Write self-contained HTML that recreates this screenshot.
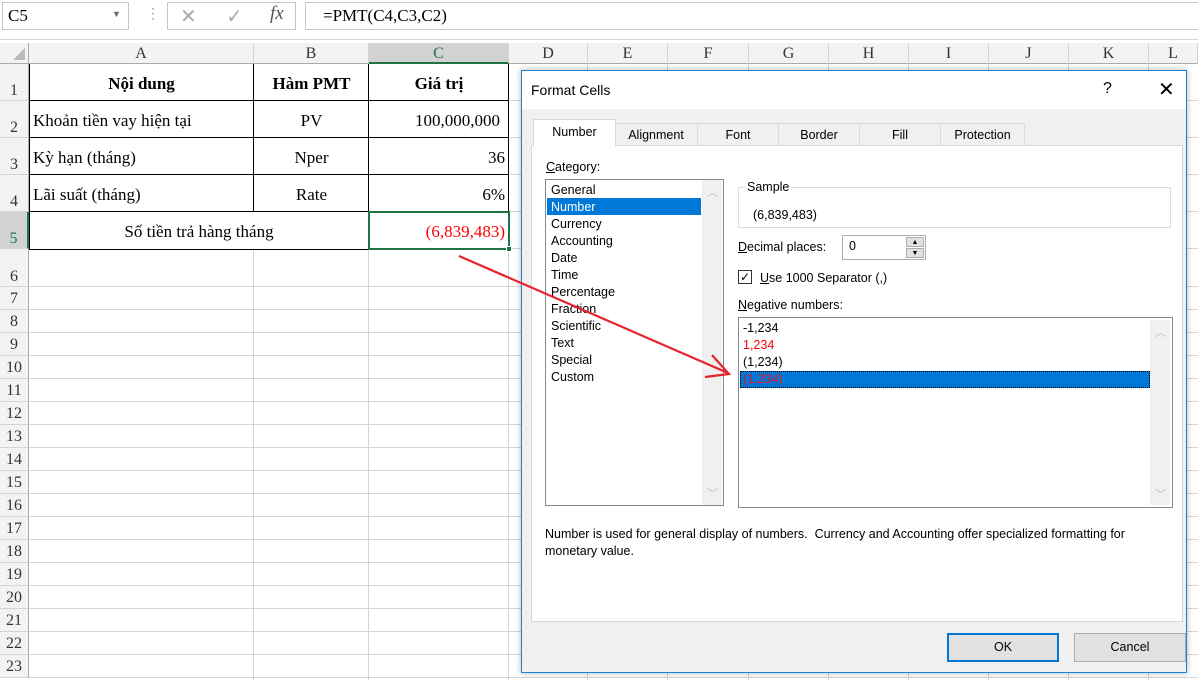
<!DOCTYPE html>
<html><head><meta charset="utf-8"><style>
*{margin:0;padding:0;box-sizing:border-box}
body{width:1198px;height:680px;overflow:hidden;background:#fff;position:relative;font-family:"Liberation Serif",serif}
.a{position:absolute}
.ui{font-family:"Liberation Sans","DejaVu Sans",sans-serif;font-size:12.5px;color:#000}
.ch{position:absolute;top:43px;height:21px;background:#f3f3f3;border-right:1px solid #d4d4d4;border-bottom:1px solid #ababab;text-align:center;font-size:16px;line-height:21px;color:#333}
.rh{position:absolute;left:0;width:29px;background:#f3f3f3;border-bottom:1px solid #d4d4d4;border-right:1px solid #ababab;text-align:center;font-size:16px;color:#333}
.vl{position:absolute;width:1px;background:#d4d4d4;top:64px;height:616px}
.hl{position:absolute;height:1px;background:#d4d4d4;left:29px;width:1169px}
.c{position:absolute;font-size:17px;color:#000;white-space:nowrap}
.it{position:absolute;left:5px;height:17px;line-height:17px}
</style></head><body>
<!-- formula bar -->
<div class="a" style="left:0;top:0;width:1198px;height:40px;background:#fff;border-bottom:1px solid #d4d4d4"></div>
<div class="a" style="left:2px;top:2px;width:127px;height:28px;border:1px solid #c6c6c6;font-size:17px;line-height:26px;padding-left:5px">C5</div>
<div class="a" style="left:112px;top:9px;font-size:9px;color:#666">▼</div>
<div class="a" style="left:146px;top:6px;color:#999;font-size:14px">⋮</div>
<div class="a" style="left:167px;top:2px;width:129px;height:28px;border:1px solid #c6c6c6"></div>
<div class="a" style="left:180px;top:4px;font-size:20px;color:#aaa;font-family:'DejaVu Sans'">✕</div>
<div class="a" style="left:226px;top:4px;font-size:20px;color:#aaa;font-family:'DejaVu Sans'">✓</div>
<div class="a" style="left:270px;top:3px;font-size:19px;font-style:italic;color:#555">fx</div>
<div class="a" style="left:305px;top:2px;width:893px;height:28px;border:1px solid #c6c6c6;border-right:none;font-size:17px;line-height:26px;padding-left:17px">=PMT(C4,C3,C2)</div>
<!-- headers -->
<div class="a" style="left:0;top:43px;width:29px;height:21px;background:#f3f3f3;border-right:1px solid #ababab;border-bottom:1px solid #ababab"></div>
<div class="a" style="left:13px;top:48px;width:0;height:0;border-left:12px solid transparent;border-bottom:12px solid #bbb"></div>
<div class="ch" style="left:29px;width:225px">A</div>
<div class="ch" style="left:254px;width:115px">B</div>
<div class="ch" style="left:369px;width:140px;background:#d2d2d2;color:#217346;border-bottom:2px solid #217346">C</div>
<div class="ch" style="left:509px;width:79px">D</div>
<div class="ch" style="left:588px;width:80px">E</div>
<div class="ch" style="left:668px;width:81px">F</div>
<div class="ch" style="left:749px;width:80px">G</div>
<div class="ch" style="left:829px;width:80px">H</div>
<div class="ch" style="left:909px;width:80px">I</div>
<div class="ch" style="left:989px;width:80px">J</div>
<div class="ch" style="left:1069px;width:80px">K</div>
<div class="ch" style="left:1149px;width:49px">L</div>
<!-- grid -->
<div class="vl" style="left:253px"></div><div class="vl" style="left:368px"></div><div class="vl" style="left:508px"></div>
<div class="vl" style="left:587px"></div><div class="vl" style="left:667px"></div><div class="vl" style="left:748px"></div>
<div class="vl" style="left:828px"></div><div class="vl" style="left:908px"></div><div class="vl" style="left:988px"></div>
<div class="vl" style="left:1068px"></div><div class="vl" style="left:1148px"></div>
<div id="rows"></div>
<script>
var r=[[64,101],[101,138],[138,175],[175,212],[212,249],[249,287]];
for(var i=0;i<17;i++)r.push([287+i*23,310+i*23]);
var h='';
r.forEach(function(v,i){
 var hl=i==4?'background:#d2d2d2;color:#217346;border-right:2px solid #217346;':'';
 h+='<div class="rh" style="top:'+v[0]+'px;height:'+(v[1]-v[0])+'px;line-height:'+(i<6?(2*(v[1]-v[0])-20):(v[1]-v[0]))+'px;'+hl+'">'+(i+1)+'</div>';
 h+='<div class="hl" style="top:'+(v[1]-1)+'px"></div>';
});
document.getElementById('rows').innerHTML=h;
</script>
<!-- table borders -->
<div class="a" style="left:29px;top:64px;width:480px;height:186px;border:1px solid #000;border-top:none;background:#fff"></div>
<div class="a" style="left:29px;top:100px;width:480px;height:1px;background:#000"></div>
<div class="a" style="left:29px;top:137px;width:480px;height:1px;background:#000"></div>
<div class="a" style="left:29px;top:174px;width:480px;height:1px;background:#000"></div>
<div class="a" style="left:29px;top:211px;width:480px;height:1px;background:#000"></div>
<div class="a" style="left:253px;top:64px;width:1px;height:148px;background:#000"></div>
<div class="a" style="left:368px;top:64px;width:1px;height:186px;background:#000"></div>
<div class="c" style="left:29px;width:225px;top:74px;text-align:center;font-weight:bold">Nội dung</div>
<div class="c" style="left:254px;width:115px;top:74px;text-align:center;font-weight:bold">Hàm PMT</div>
<div class="c" style="left:369px;width:140px;top:74px;text-align:center;font-weight:bold">Giá trị</div>
<div class="c" style="left:33px;top:111px">Khoản tiền vay hiện tại</div>
<div class="c" style="left:254px;width:115px;top:111px;text-align:center">PV</div>
<div class="c" style="left:369px;width:131px;top:111px;text-align:right">100,000,000</div>
<div class="c" style="left:33px;top:148px">Kỳ hạn (tháng)</div>
<div class="c" style="left:254px;width:115px;top:148px;text-align:center">Nper</div>
<div class="c" style="left:369px;width:136px;top:148px;text-align:right">36</div>
<div class="c" style="left:33px;top:185px">Lãi suất (tháng)</div>
<div class="c" style="left:254px;width:115px;top:185px;text-align:center">Rate</div>
<div class="c" style="left:369px;width:136px;top:185px;text-align:right">6%</div>
<div class="c" style="left:29px;width:340px;top:222px;text-align:center">Số tiền trả hàng tháng</div>
<div class="a" style="left:368px;top:211px;width:142px;height:39px;border:2px solid #217346"></div>
<div class="a" style="left:506px;top:246px;width:6px;height:6px;background:#217346;border:1px solid #fff"></div>
<div class="c" style="left:369px;width:136px;top:222px;text-align:right;color:#f00">(6,839,483)</div>
<!-- dialog -->
<div class="a ui" style="left:521px;top:70px;width:666px;height:603px;background:#f0f0f0;border:1px solid #1883d7;box-shadow:0 0 6px rgba(0,0,0,.3)">
 <div class="a" style="left:0;top:0;width:664px;height:38px;background:#fff"></div>
 <div class="a" style="left:9px;top:11px;font-size:14px">Format Cells</div>
 <div class="a" style="left:581px;top:9px;font-size:16px">?</div>
 <div class="a" style="left:636px;top:6px;font-size:20px;font-family:'DejaVu Sans';font-weight:200">✕</div>
 <!-- tabs -->
 <div class="a" style="left:9px;top:74px;width:652px;height:477px;background:#fff;border:1px solid #d9d9d9"></div>
 <div class="a" style="left:92px;top:52px;width:84px;height:23px;border:1px solid #d9d9d9;text-align:center;line-height:22px">Alignment</div>
 <div class="a" style="left:175px;top:52px;width:82px;height:23px;border:1px solid #d9d9d9;text-align:center;line-height:22px">Font</div>
 <div class="a" style="left:256px;top:52px;width:82px;height:23px;border:1px solid #d9d9d9;text-align:center;line-height:22px">Border</div>
 <div class="a" style="left:337px;top:52px;width:82px;height:23px;border:1px solid #d9d9d9;text-align:center;line-height:22px">Fill</div>
 <div class="a" style="left:418px;top:52px;width:85px;height:23px;border:1px solid #d9d9d9;text-align:center;line-height:22px">Protection</div>
 <div class="a" style="left:11px;top:48px;width:83px;height:28px;background:#fff;border:1px solid #d9d9d9;border-bottom:none;text-align:center;line-height:25px">Number</div>
 <div class="a" style="left:24px;top:89px"><u>C</u>ategory:</div>
 <!-- category list -->
 <div class="a" style="left:23px;top:108px;width:179px;height:327px;background:#fff;border:1px solid #828790">
  <div class="a" style="left:156px;top:0;width:20px;height:325px;background:#f0f0f0"></div>
  <div class="a" style="left:161px;top:4px;color:#bbb;font-size:11px">︿</div>
  <div class="a" style="left:161px;top:305px;color:#bbb;font-size:11px">﹀</div>
  <div class="a" style="left:1px;top:18px;width:154px;height:17px;background:#0078d7"></div>
  <div class="it" style="top:2px">General</div>
  <div class="it" style="top:19px;color:#fff">Number</div>
  <div class="it" style="top:36px">Currency</div>
  <div class="it" style="top:53px">Accounting</div>
  <div class="it" style="top:70px">Date</div>
  <div class="it" style="top:87px">Time</div>
  <div class="it" style="top:104px">Percentage</div>
  <div class="it" style="top:121px">Fraction</div>
  <div class="it" style="top:138px">Scientific</div>
  <div class="it" style="top:155px">Text</div>
  <div class="it" style="top:172px">Special</div>
  <div class="it" style="top:189px">Custom</div>
 </div>
 <!-- sample -->
 <div class="a" style="left:216px;top:116px;width:433px;height:41px;border:1px solid #dcdcdc"></div>
 <div class="a" style="left:223px;top:109px;background:#fff;padding:0 2px">Sample</div>
 <div class="a" style="left:231px;top:137px">(6,839,483)</div>
 <div class="a" style="left:216px;top:169px"><u>D</u>ecimal places:</div>
 <div class="a" style="left:320px;top:164px;width:84px;height:25px;border:1px solid #adadad;background:#fff;padding:3px 0 0 6px">0</div>
 <div class="a" style="left:384px;top:166px;width:18px;height:10px;background:#e1e1e1;border:1px solid #adadad;font-size:7px;text-align:center;line-height:9px">▲</div>
 <div class="a" style="left:384px;top:177px;width:18px;height:10px;background:#e1e1e1;border:1px solid #adadad;font-size:7px;text-align:center;line-height:9px">▼</div>
 <div class="a" style="left:216px;top:199px;width:14px;height:14px;border:1px solid #333;background:#fff;font-size:12px;line-height:12px;text-align:center">✓</div>
 <div class="a" style="left:238px;top:200px"><u>U</u>se 1000 Separator (,)</div>
 <div class="a" style="left:216px;top:227px"><u>N</u>egative numbers:</div>
 <!-- negative list -->
 <div class="a" style="left:216px;top:246px;width:435px;height:191px;background:#fff;border:1px solid #828790">
  <div class="a" style="left:411px;top:2px;width:20px;height:185px;background:#f0f0f0"></div>
  <div class="a" style="left:416px;top:6px;color:#bbb;font-size:11px">︿</div>
  <div class="a" style="left:416px;top:168px;color:#bbb;font-size:11px">﹀</div>
  <div class="a" style="left:1px;top:53px;width:410px;height:17px;background:#0078d7;border:1px dotted #000"></div>
  <div class="it" style="left:4px;top:2px">-1,234</div>
  <div class="it" style="left:4px;top:19px;color:#f00">1,234</div>
  <div class="it" style="left:4px;top:36px">(1,234)</div>
  <div class="it" style="left:4px;top:53px;color:#e81123">(1,234)</div>
 </div>
 <div class="a" style="left:23px;top:455px;width:630px;line-height:17px">Number is used for general display of numbers.&nbsp; Currency and Accounting offer specialized formatting for monetary value.</div>
 <div class="a" style="left:425px;top:562px;width:112px;height:29px;border:2px solid #0078d7;background:#e1e1e1;text-align:center;line-height:25px">OK</div>
 <div class="a" style="left:552px;top:562px;width:112px;height:29px;border:1px solid #adadad;background:#e1e1e1;text-align:center;line-height:27px">Cancel</div>
</div>
<!-- arrow -->
<svg class="a" style="left:0;top:0" width="1198" height="680"><g stroke="#e8232b" stroke-width="2.2" fill="none"><path d="M459 256 L728 373"/><path d="M712 355 L729 374 L705 377"/></g></svg>
</body></html>
